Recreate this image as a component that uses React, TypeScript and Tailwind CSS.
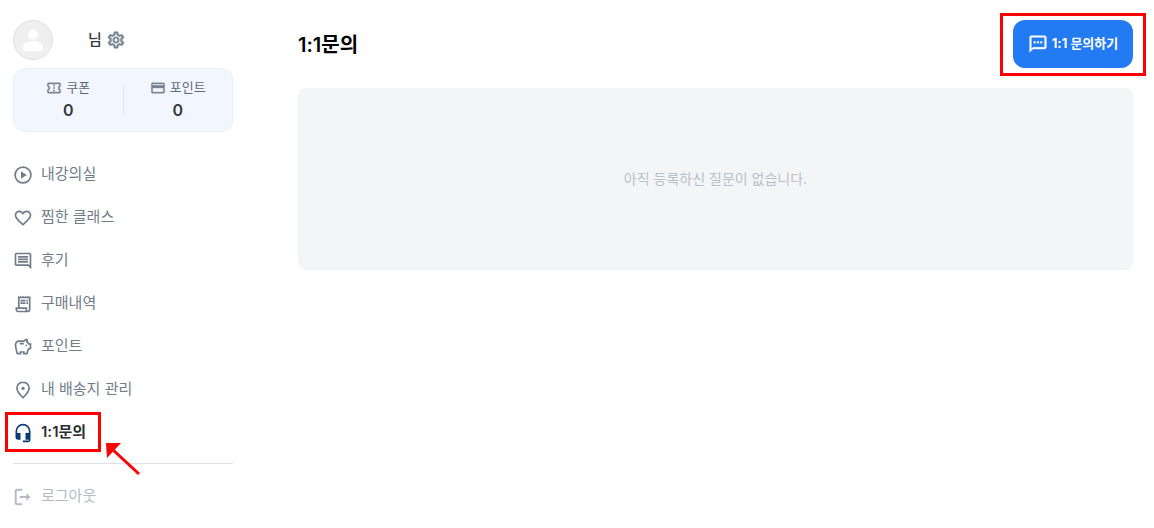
import React from 'react';
import type { IconType } from 'react-icons';
import {
  MdFavoriteBorder,
  MdHeadsetMic,
  MdOutlineComment,
  MdOutlineConfirmationNumber,
  MdOutlineCreditCard,
  MdOutlineReceiptLong,
  MdOutlineSavings,
  MdOutlineSettings,
  MdOutlineTextsms,
} from 'react-icons/md';

interface IconProps {
  className?: string;
}

const PlayCircleIcon: React.FC<IconProps> = ({ className }) => (
  <svg viewBox="0 0 24 24" fill="none" stroke="currentColor" strokeWidth="2" className={className} aria-hidden="true">
    <circle cx="12" cy="12" r="9.5" />
    <path d="M9.5 7.5v9l7-4.5Z" fill="currentColor" stroke="none" />
  </svg>
);

const PinIcon: React.FC<IconProps> = ({ className }) => (
  <svg viewBox="0 0 24 24" fill="none" stroke="currentColor" strokeWidth="2" className={className} aria-hidden="true">
    <path d="M12 2.5c-4.2 0-7.3 3.2-7.3 7.2 0 4.8 4.8 9.3 7.3 11.6 2.5-2.3 7.3-6.8 7.3-11.6 0-4-3.1-7.2-7.3-7.2Z" />
    <circle cx="12" cy="10" r="2" fill="currentColor" stroke="none" />
  </svg>
);

const LogoutIcon: React.FC<IconProps> = ({ className }) => (
  <svg viewBox="0 0 24 24" fill="none" stroke="currentColor" strokeWidth="2.4" className={className} aria-hidden="true">
    <path d="M11 3.2H5Q3.200 3.200 3.200 5v14q0 1.800 1.800 1.800h6M8 12h10" />
    <path d="M16 7.5l5 4.500-5 4.500Z" fill="currentColor" stroke="none" />
  </svg>
);

interface MenuItem {
  label: string;
  icon: IconType | React.FC<IconProps>;
}

const menuItems: MenuItem[] = [
  { label: '내강의실', icon: PlayCircleIcon },
  { label: '찜한 클래스', icon: MdFavoriteBorder },
  { label: '후기', icon: MdOutlineComment },
  { label: '구매내역', icon: MdOutlineReceiptLong },
  { label: '포인트', icon: MdOutlineSavings },
  { label: '내 배송지 관리', icon: PinIcon },
];

const balances: MenuItem[] = [
  { label: '쿠폰', icon: MdOutlineConfirmationNumber },
  { label: '포인트', icon: MdOutlineCreditCard },
];

// the icon set ships an invisible bounding path, so only the drawn paths get the extra stroke
const boldIcon = 'stroke-[0.5] [&>path[fill=none]]:stroke-none';

const Sidebar: React.FC = () => (
  <aside className="w-[220px] shrink-0">
    <div className="flex h-10 items-center">
      <div className="h-10 w-10 overflow-hidden rounded-full border border-[#e0e0e0] bg-[#efefef]">
        <svg viewBox="0 0 38 38" fill="#fff" aria-hidden="true">
          <circle cx="19" cy="13.5" r="5" />
          <path d="M9 27c0-5 4-7 10-7s10 2 10 7v1q0 2-2 2H11q-2 0-2-2Z" />
        </svg>
      </div>
      <span className="ml-[35px] text-[15px] font-medium text-[#343a40]">님</span>
      <button type="button" aria-label="설정" className="ml-1 text-[#788391]">
        <MdOutlineSettings className={`h-5 w-5 ${boldIcon}`} />
      </button>
    </div>

    <div className="mt-2 flex h-16 items-center rounded-xl border border-[#e7f1fe] bg-[#f2f7ff]">
      {balances.map(({ label, icon: Icon }, index) => (
        <div
          key={label}
          className={
            index > 0
              ? 'flex h-8 flex-1 flex-col items-center justify-center border-l border-[#d8e6fb]'
              : 'flex h-8 flex-1 flex-col items-center justify-center'
          }
        >
          <div className="flex h-5 shrink-0 items-center gap-1 text-[13px] text-[#5f6b7a]">
            <Icon className={`h-4 w-4 text-[#788391] ${boldIcon}`} />
            {label}
          </div>
          <div className="text-base leading-6 font-semibold text-[#343a40]">0</div>
        </div>
      ))}
    </div>

    <nav className="mt-[21px]">
      <ul>
        {menuItems.map(({ label, icon: Icon }) => (
          <li key={label}>
            <a href="#" className="flex h-[43px] items-center gap-2 text-[15px] text-[#717c8a]">
              <Icon className="h-5 w-5" />
              {label}
            </a>
          </li>
        ))}
        <li className="relative">
          <a href="#" aria-current="page" className="flex h-[43px] items-center gap-2 text-[15px] font-semibold text-[#292e33]">
            <MdHeadsetMic className="h-5 w-5 text-[#063a74]" />
            1:1문의
          </a>
          <div className="pointer-events-none absolute top-px -left-2 h-10 w-24 border-3 border-[#f00]" />
          <svg viewBox="0 0 36 34" className="pointer-events-none absolute top-8 left-[93px] h-[34px] w-9" aria-hidden="true">
            <path d="M0 0h15L1 15Z" fill="#f00" />
            <path d="M6 6l27 25" stroke="#f00" strokeWidth="3" />
          </svg>
        </li>
      </ul>
      <div className="mt-[9px] border-t border-[#dee2e6] pt-[11px]">
        <button type="button" className="flex h-[43px] items-center gap-2 text-[15px] text-[#b5bbc2]">
          <LogoutIcon className="h-5 w-5" />
          로그아웃
        </button>
      </div>
    </nav>
  </aside>
);

const InquiryPanel: React.FC = () => (
  <main className="min-w-0 flex-1">
    <div className="flex h-12 items-center justify-between">
      <h1 className="pt-0.5 text-xl font-semibold text-black">1:1문의</h1>
      <div className="relative">
        <button type="button" className="flex h-12 w-[120px] items-center justify-center gap-1 rounded-xl bg-[#237bf3] text-[13px] font-bold text-white">
          <MdOutlineTextsms className={`h-5 w-5 ${boldIcon}`} />
          1:1 문의하기
        </button>
        <div className="pointer-events-none absolute -inset-x-[13px] -top-[7px] -bottom-2 border-3 border-[#f00]" />
      </div>
    </div>
    <div className="mt-5 flex h-[182px] items-center justify-center rounded-lg bg-[#f4f5f7] text-sm text-[#b9bfc6]">
      아직 등록하신 질문이 없습니다.
    </div>
  </main>
);

export default function App() {
  return (
    <div className="flex gap-[65px] bg-white pt-5 pr-[21px] pb-2 pl-[13px] font-['Inter','Noto_Sans_CJK_KR',sans-serif]">
      <Sidebar />
      <InquiryPanel />
    </div>
  );
}
